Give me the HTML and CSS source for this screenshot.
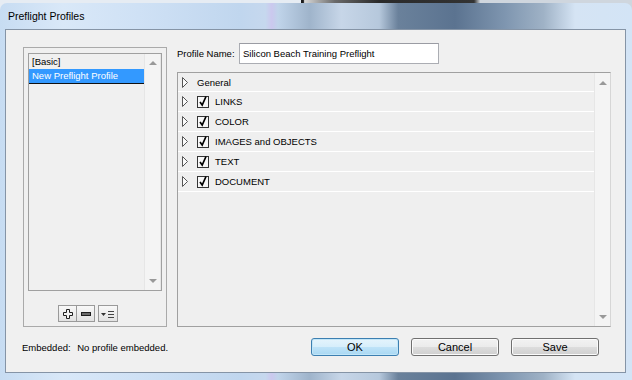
FILE: index.html
```html
<!DOCTYPE html>
<html lang="en">
<head>
    <meta charset="UTF-8">
    <title>Preflight Profiles</title>
    <link rel="stylesheet" href="styles.css">
</head>
<body>
    <div class="window">
        <div class="titlebar">
            <span class="title">Preflight Profiles</span>
        </div>

        <div class="client">
            <div class="main">
                <!-- profile list -->
                <div class="profiles-group">
                    <div class="profile-list">
                        <ul class="items">
                            <li class="item">[Basic]</li>
                            <li class="item selected">New Preflight Profile</li>
                        </ul>
                        <div class="vscroll">
                            <span class="arrow up"></span>
                            <span class="arrow down"></span>
                        </div>
                    </div>
                    <div class="list-tools">
                        <div class="tool-pair">
                            <button class="tool">
                                <svg width="12" height="12" viewBox="0 0 12 12"><path d="M4.5 1.5h3v3h3v3h-3v3h-3v-3h-3v-3h3z" fill="#f2f2f2" stroke="#1e1e1e"/></svg>
                            </button>
                            <button class="tool">
                                <svg width="12" height="12" viewBox="0 0 12 12"><rect x="1.5" y="4.5" width="9" height="3" fill="#6a6a6a" stroke="#1e1e1e"/></svg>
                            </button>
                        </div>
                        <button class="tool menu">
                            <svg width="14" height="10" viewBox="0 0 14 10"><polygon points="0,4 5,4 2.5,7" fill="#333"/><path d="M7 2.5h6M7 5.5h6M7 8.5h6" stroke="#444"/></svg>
                        </button>
                    </div>
                </div>

                <!-- profile settings -->
                <div class="settings">
                    <div class="name-row">
                        <label for="profile-name">Profile Name:</label>
                        <input type="text" id="profile-name" value="Silicon Beach Training Preflight">
                    </div>
                    <div class="tree">
                        <ul class="nodes">
                            <li class="node">
                                <span class="twisty"><svg width="6" height="11" viewBox="0 0 6 11"><polygon points="0.5,0.5 5.5,5.5 0.5,10.5" fill="#fafafa" stroke="#555"/></svg></span>
                                <span class="label">General</span>
                            </li>
                            <li class="node">
                                <span class="twisty"><svg width="6" height="11" viewBox="0 0 6 11"><polygon points="0.5,0.5 5.5,5.5 0.5,10.5" fill="#fafafa" stroke="#555"/></svg></span>
                                <span class="check"><svg width="13" height="13" viewBox="0 0 13 13"><rect x="0.5" y="1.5" width="11" height="11" fill="#f7f7f7" stroke="#333"/><path d="M3 7l2.2 3L9 1.5" fill="none" stroke="#000" stroke-width="1.7"/></svg></span>
                                <span class="label">LINKS</span>
                            </li>
                            <li class="node">
                                <span class="twisty"><svg width="6" height="11" viewBox="0 0 6 11"><polygon points="0.5,0.5 5.5,5.5 0.5,10.5" fill="#fafafa" stroke="#555"/></svg></span>
                                <span class="check"><svg width="13" height="13" viewBox="0 0 13 13"><rect x="0.5" y="1.5" width="11" height="11" fill="#f7f7f7" stroke="#333"/><path d="M3 7l2.2 3L9 1.5" fill="none" stroke="#000" stroke-width="1.7"/></svg></span>
                                <span class="label">COLOR</span>
                            </li>
                            <li class="node">
                                <span class="twisty"><svg width="6" height="11" viewBox="0 0 6 11"><polygon points="0.5,0.5 5.5,5.5 0.5,10.5" fill="#fafafa" stroke="#555"/></svg></span>
                                <span class="check"><svg width="13" height="13" viewBox="0 0 13 13"><rect x="0.5" y="1.5" width="11" height="11" fill="#f7f7f7" stroke="#333"/><path d="M3 7l2.2 3L9 1.5" fill="none" stroke="#000" stroke-width="1.7"/></svg></span>
                                <span class="label">IMAGES and OBJECTS</span>
                            </li>
                            <li class="node">
                                <span class="twisty"><svg width="6" height="11" viewBox="0 0 6 11"><polygon points="0.5,0.5 5.5,5.5 0.5,10.5" fill="#fafafa" stroke="#555"/></svg></span>
                                <span class="check"><svg width="13" height="13" viewBox="0 0 13 13"><rect x="0.5" y="1.5" width="11" height="11" fill="#f7f7f7" stroke="#333"/><path d="M3 7l2.2 3L9 1.5" fill="none" stroke="#000" stroke-width="1.7"/></svg></span>
                                <span class="label">TEXT</span>
                            </li>
                            <li class="node">
                                <span class="twisty"><svg width="6" height="11" viewBox="0 0 6 11"><polygon points="0.5,0.5 5.5,5.5 0.5,10.5" fill="#fafafa" stroke="#555"/></svg></span>
                                <span class="check"><svg width="13" height="13" viewBox="0 0 13 13"><rect x="0.5" y="1.5" width="11" height="11" fill="#f7f7f7" stroke="#333"/><path d="M3 7l2.2 3L9 1.5" fill="none" stroke="#000" stroke-width="1.7"/></svg></span>
                                <span class="label">DOCUMENT</span>
                            </li>
                        </ul>
                        <div class="vscroll">
                            <span class="arrow up"></span>
                            <span class="arrow down"></span>
                        </div>
                    </div>
                </div>
            </div>

            <div class="footer">
                <div class="embedded">
                    <span>Embedded:</span>
                    <span class="embedded-value">No profile embedded.</span>
                </div>
                <div class="actions">
                    <button class="btn default">OK</button>
                    <button class="btn">Cancel</button>
                    <button class="btn">Save</button>
                </div>
            </div>
        </div>
    </div>
</body>
</html>
```

FILE: styles.css
```css
body {
    margin: 0;
    width: 632px;
    height: 380px;
    overflow: hidden;
    font-family: "Liberation Sans", Arial, sans-serif;
    font-size: 9.5px;
    color: #000;
    background: linear-gradient(to right, #e6ecf3 0, #e6ecf3 47.6%, #1a1a1a 47.7%, #1a1a1a 48%, #d8d8d8 48.2%, #6a6a6a 53%, #2a2a2a 60%, #333 75%, #cfd6de 76%);
}

.window {
    margin-top: 3px;
    height: 377px;
    box-sizing: border-box;
    padding: 0 6px 7px 5px;
    display: flex;
    flex-direction: column;
    border-radius: 7px 7px 0 0;
    background: linear-gradient(to right, #c7dcf2 0, #d9e8f8 10%, #cfe1f5 22%, #c0d6ee 38%, #c6d8ee 42%, #cbc8ee 43%, #c0d4ea 44%, #9fb4cb 49%, #c7d6e8 54%, #b6c8dc 60%, #6a819b 63%, #5b7390 72%, #7f96b0 80%, #9fb2c6 86%, #d5e4f4 91%, #d3e4f6 100%);
}

.titlebar {
    height: 26px;
    display: flex;
    align-items: center;
    padding-left: 3px;
}

.title {
    font-size: 10.5px;
    color: #000;
}

.client {
    flex: 1;
    display: flex;
    flex-direction: column;
    border: 1px solid #8594a6;
    background: #f0f0f0;
}

.main {
    display: flex;
    align-items: flex-start;
    padding: 13px 0 0 17px;
}

/* left side */
.profiles-group {
    margin-top: 4px;
    width: 144px;
    height: 280px;
    box-sizing: border-box;
    border: 1px solid #aaa;
    padding: 5px 4px 0 4px;
}

.profile-list {
    height: 238px;
    display: flex;
    box-sizing: border-box;
    border: 1px solid #a0a0a0;
}

.items {
    flex: 1;
    list-style: none;
    margin: 0;
    padding: 0;
}

.item {
    height: 15px;
    line-height: 15px;
    padding-left: 3px;
    box-sizing: border-box;
}

.item.selected {
    background: #3399ff;
    color: #fff;
    line-height: 14px;
    border-bottom: 1px solid #111;
}

.vscroll {
    width: 15px;
    display: flex;
    flex-direction: column;
    justify-content: space-between;
    align-items: center;
    padding: 7px 0;
    background: #f4f4f4;
    border-left: 1px solid #e6e6e6;
    border-right: 1px solid #e6e6e6;
}

.arrow {
    width: 0;
    height: 0;
    border-left: 4px solid transparent;
    border-right: 4px solid transparent;
}

.arrow.up {
    border-bottom: 4px solid #999;
}

.arrow.down {
    border-top: 4px solid #999;
}

.list-tools {
    display: flex;
    gap: 3px;
    margin: 14px 0 0 30px;
}

.tool-pair {
    display: flex;
}

.tool {
    width: 19px;
    height: 17px;
    padding: 0;
    display: flex;
    align-items: center;
    justify-content: center;
    border: 1px solid #9a9a9a;
    background: linear-gradient(#f8f8f8, #e2e2e2);
}

.tool-pair .tool + .tool {
    margin-left: -1px;
}

.tool.menu {
    width: 20px;
}

/* right side */
.settings {
    margin-left: 10px;
    width: 434px;
}

.name-row {
    display: flex;
    align-items: center;
    height: 21px;
}

.name-row label {
    width: 62px;
}

.name-row input {
    width: 200px;
    height: 21px;
    box-sizing: border-box;
    padding: 0 3px;
    border: 1px solid #abadb3;
    border-top-color: #9a9ca3;
    background: #fff;
    font-family: inherit;
    font-size: 9.5px;
    color: #000;
}

.tree {
    margin-top: 8px;
    height: 255px;
    display: flex;
    box-sizing: border-box;
    border: 1px solid #a0a0a0;
    border-right-color: #d6d6d6;
    background: #efefef;
}

.nodes {
    flex: 1;
    list-style: none;
    margin: 0;
    padding: 0;
}

.node {
    height: 20px;
    box-sizing: border-box;
    border-bottom: 1px solid #fff;
    display: flex;
    align-items: center;
    padding-left: 4px;
}

.node:first-child {
    height: 19px;
}

.twisty {
    display: flex;
    margin-right: 9px;
}

.check {
    display: flex;
    margin-right: 5px;
}

.tree .vscroll {
    border-right: none;
    padding: 8px 0 7px;
}

/* footer */
.footer {
    display: flex;
    align-items: center;
    margin-top: 11px;
    padding: 0 26px 0 16px;
}

.embedded-value {
    margin-left: 4px;
}

.actions {
    margin-left: auto;
    display: flex;
    gap: 12px;
}

.btn {
    width: 88px;
    height: 18px;
    padding: 0;
    border: 1px solid #707070;
    border-radius: 3px;
    background: linear-gradient(#f2f2f2 0, #ebebeb 50%, #dddddd 50%, #cfcfcf 100%);
    box-shadow: inset 0 0 0 1px #fbfbfb;
    font-family: "Liberation Sans", Arial, sans-serif;
    font-size: 11px;
    color: #000;
}

.btn.default {
    border-color: #3c7fb1;
    background: linear-gradient(#e5f4fc 0, #d6eefb 50%, #bfe3f8 50%, #a9d8f3 100%);
    box-shadow: inset 0 0 0 1px #c2e6f8;
}
```
